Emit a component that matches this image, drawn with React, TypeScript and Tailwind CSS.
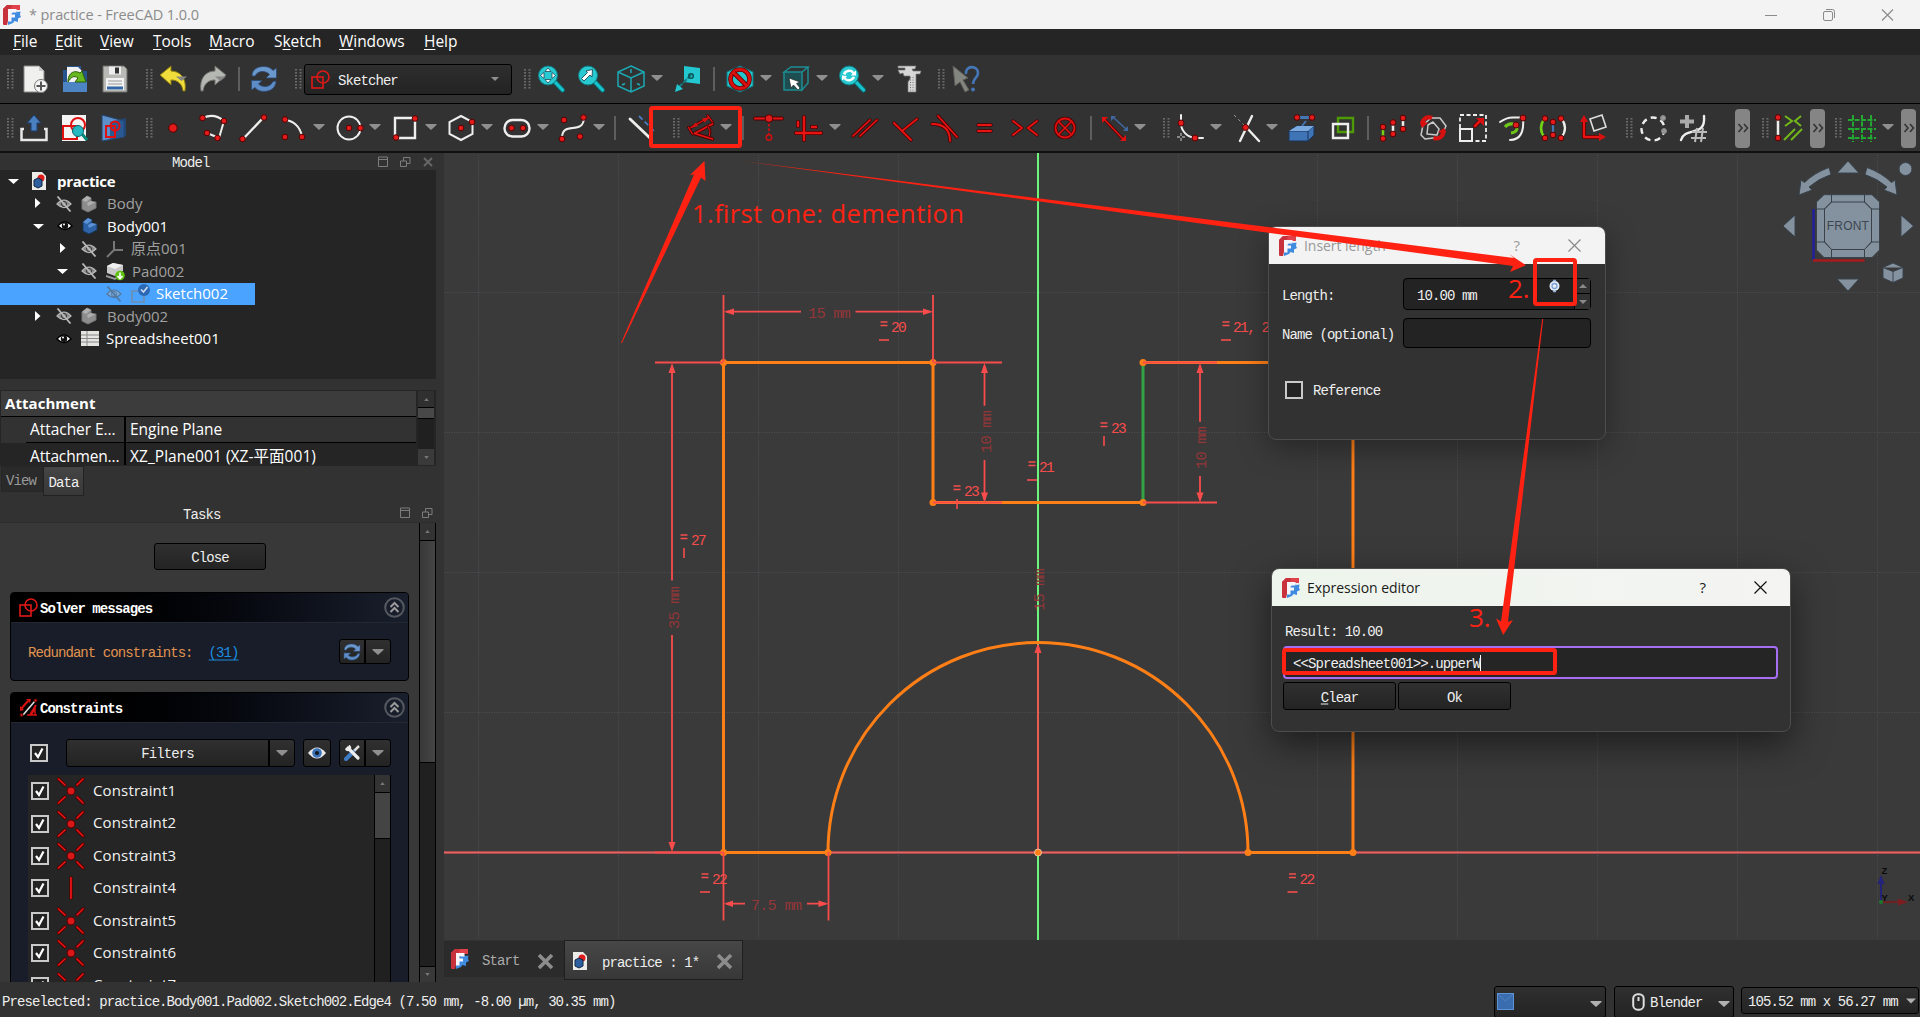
import React from "react";

type Kids = { children?: React.ReactNode };

const MONO = "font-['Liberation_Mono',monospace] text-[14px] tracking-[-0.92px] whitespace-pre";
const SANS = "font-['Open_Sans','Noto_Sans_CJK_SC',sans-serif] whitespace-pre";

/* Monospace label, nudged down to sit on the optical centre of its row. */
const M = ({ children, className = "" }: Kids & { className?: string }) => (
  <span className={`${MONO} translate-y-[1.500px] ${className}`}>{children}</span>
);

/* ---------- drawing helpers ---------- */

const R = ({ d, w = 2.2 }: { d: string; w?: number }) => (
  <g fill="none" strokeLinecap="round" strokeLinejoin="round">
    <path d={d} stroke="#4d0000" strokeWidth={w + 1.6} />
    <path d={d} stroke="#e81414" strokeWidth={w} />
  </g>
);
const W = ({ d, c = "#eeeeec", w = 2 }: { d: string; c?: string; w?: number }) => (
  <path d={d} fill="none" stroke={c} strokeWidth={w} strokeLinecap="round" strokeLinejoin="round" />
);
const D = ({ x, y, r = 2.8, c = "#e31b1b", s = "#5a0000" }: { x: number; y: number; r?: number; c?: string; s?: string }) => (
  <circle cx={x} cy={y} r={r} fill={c} stroke={s} strokeWidth="1" />
);

const Ico = ({ children }: Kids) => (
  <div className="flex w-10 shrink-0 justify-center">
    <svg width="28" height="28" viewBox="0 0 28 28" className="overflow-visible">{children}</svg>
  </div>
);
const Caret = ({ c = "#8f8f8f" }: { c?: string }) => (
  <svg width="12" height="6" viewBox="0 0 12 6"><path d="M0.5 0H11.5V1L6 6L0.5 1Z" fill={c} /></svg>
);
const Arr = () => <div className="flex w-4 shrink-0 -translate-y-px justify-center pr-1"><Caret /></div>;
const Sep = () => <div className="flex w-[11px] shrink-0 justify-center"><div className="h-6 w-0.5 bg-[#5e5e5e]" /></div>;
const Grip = () => (
  <svg width="7" height="20" viewBox="0 0 7 20" className="shrink-0">
    {[0, 3, 6, 9, 12, 15, 18].map((y) => (
      <g key={y} fill="#6a6a6a"><rect x="0" y={y} width="2" height="1.6" /><rect x="4.5" y={y} width="2" height="1.6" /></g>
    ))}
  </svg>
);
const Handle = () => <div className="flex w-[19px] shrink-0 justify-end"><Grip /></div>;
const Handle0 = () => <div className="flex w-[14px] shrink-0 justify-end"><Grip /></div>;
const More = () => (
  <div className="flex h-[39px] w-[15px] shrink-0 items-center justify-center rounded bg-[#858585]">
    <svg width="12" height="10" viewBox="0 0 12 10"><path d="M1.5 1L5 5L1.5 9M7 1L10.5 5L7 9" fill="none" stroke="#333" strokeWidth="1.6" /></svg>
  </div>
);

const Logo = () => (
  <svg width="18" height="20" viewBox="0 0 18 20">
    <path d="M4 0H17V5H6V14L1 20L0 19V4Z" fill="#e0414b" />
    <path d="M4 0H9L4 20H1L0 19V4Z" fill="#c8323c" />
    <path d="M12 5L14.5 7L17.5 6.5L17 10L18 12L15 13.5L15 17L11.5 16L10 18L5 20L5 12Z" fill="#3f8be0" />
    <path d="M5 4H13.5V7.5H8.5V9.5H12V12.5H8.5V16.5H5Z" fill="#f6f6fa" />
  </svg>
);

const Refresh = ({ s = 28 }: { s?: number }) => (
  <svg width={s} height={s} viewBox="0 0 28 28">
    <path d="M2 11C2 4 8 1.5 14 1.5C18 1.5 21 3 23 5.5L26.5 3V13H16L19.5 9.5C16 5.5 8 5 5 11Z" fill="#6a97cc" stroke="#2c4a75" strokeWidth=".8" />
    <path d="M26 16C26 23 20 26.5 14 26.5C10 26.5 7 25 5 22.5L1.5 25V15.5H12L8.5 19C12 22.5 20 23 23 16.5Z" fill="#5d8cc6" stroke="#2c4a75" strokeWidth=".8" />
  </svg>
);

const SketchGlyph = () => (
  <svg width="19" height="19" viewBox="0 0 19 19" fill="none" stroke="#e01818" strokeWidth="1.6">
    <rect x="1" y="7" width="11" height="11" /><circle cx="12" cy="7" r="6" />
  </svg>
);

const Lens = () => (
  <>
    <path d="M17 16L25.5 25" stroke="#0b6a70" strokeWidth="5" strokeLinecap="round" />
    <path d="M17 16L25.5 25" stroke="#19c3cc" strokeWidth="3.2" strokeLinecap="round" />
    <circle cx="11" cy="10.500" r="9.500" fill="#28c9d1" stroke="#0d7d84" strokeWidth="1" />
  </>
);

/* ---------- toolbars ---------- */

const FileBar = () => (
  <div className="flex h-[49px] items-center border-b border-black bg-[#323232]">
    <div className="flex w-[134px] items-center">
      <div className="flex w-[15px] shrink-0 justify-end pr-px"><Grip /></div>
      <Ico>
        <path d="M3 1H18L23 6V27H3Z" fill="#f0f0ee" stroke="#8a8a8a" /><path d="M18 1L23 6H18Z" fill="#c9c9c9" />
        <circle cx="20" cy="21" r="6.500" fill="#f5f5f5" stroke="#777" /><path d="M20 16.500V25.500M15.500 21H24.500" stroke="#555" strokeWidth="2" />
      </Ico>
      <Ico>
        <path d="M2 5H6V1H20V6H26V27H2Z" fill="#25548f" /><path d="M6 2H17L21 6V18H6Z" fill="#f1f1f1" />
        <path d="M2 17H26V27H2Z" fill="#4d85c4" /><path d="M7 15C8 7 14 5 19 8L21 6L25 17H14L17 13C13 10 10 12 7 17Z" fill="#66b81e" stroke="#2c5c06" />
      </Ico>
      <div className="flex w-[39px] shrink-0 justify-center">
        <svg width="28" height="28" viewBox="0 0 28 28">
          <path d="M2 1H23L26 4V27H2Z" fill="#b9b9b5" stroke="#6b6b68" /><rect x="8" y="1.500" width="12" height="8" fill="#eee" /><rect x="14" y="2.500" width="4" height="6" fill="#333" />
          <rect x="5" y="13" width="18" height="12" fill="#f2f2f2" /><path d="M7 16H21M7 19H21" stroke="#999" /><path d="M6 23H22" stroke="#3465a4" strokeWidth="3" />
        </svg>
      </div>
    </div>
    <div className="flex w-[150px] items-center">
      <Handle />
      <Ico>
        <path d="M1 10L12 1V6C21 6 28 13 26 26H24C23 19 19 15 12 15V20Z" fill="#f0dc3a" stroke="#8a7a10" />
        <path d="M17 11.500H28L22.500 16Z" fill="#858585" />
      </Ico>
      <Ico>
        <path d="M27 10L16 1V6C7 6 0 13 2 26H4C5 19 9 15 16 15V20Z" fill="#b5b7b3" stroke="#6f716d" />
        <path d="M16 11.500H27L21.500 16Z" fill="#858585" />
      </Ico>
      <Sep />
      <div className="flex w-10 justify-center"><Refresh /></div>
    </div>
    <div className="flex w-[228px] items-center">
      <div className="flex w-5 justify-end pr-0.5"><Grip /></div>
      <div className="flex h-[31px] w-[208px] items-center rounded-[3px] border border-black bg-gradient-to-b from-[#2e2e2e] to-[#232323] pl-1.5">
        <SketchGlyph />
        <M className="ml-2 flex-1 text-[#eee]">Sketcher</M>
        <span className="mr-3"><svg width="8" height="4" viewBox="0 0 8 4"><path d="M0 0H8L4 4Z" fill="#8f8f8f" /></svg></span>
      </div>
    </div>
    <div className="flex items-center">
      <Handle />
      <Ico><Lens /><path d="M11 3L14 6.500H8ZM11 18L8 14.500H14ZM3.500 10.500L7 7.500V13.500ZM18.500 10.500L15 7.500V13.500Z" fill="#fff" stroke="#134" strokeWidth=".7" /></Ico>
      <Ico><Lens /><path d="M15.500 4.500L9 6L10.500 7.500L4.500 13.500L7 16L13 10L15 12Z" fill="#fff" stroke="#134" strokeWidth=".8" /></Ico>
      <Ico><path d="M14 1L27 7V21L14 27L1 21V7ZM1 7L14 13L27 7M14 13V27M14 4V8M5 20L8 18.500M20 18.500L23 20" fill="none" stroke="#1ba9b3" strokeWidth="1.500" /></Ico>
      <Arr />
      <Ico><path d="M11 1L27 3V19L11 17Z" fill="#22c7d0" /><path d="M18 10L4 24" stroke="#167880" strokeWidth="2" strokeDasharray="5 1" fill="none" /><path d="M2 27L4 19L10 24Z" fill="#22c7d0" /><circle cx="18" cy="11" r="2.300" fill="none" stroke="#0b5055" strokeWidth="1.500" /></Ico>
      <div className="flex w-[13px] justify-center"><Sep /></div>
      <Ico><path d="M14 1L27 7V21L14 27L1 21V7Z" fill="#24c4cc" stroke="#0b7d85" /><circle cx="14" cy="14" r="9.500" fill="none" stroke="#600" strokeWidth="4.600" /><circle cx="14" cy="14" r="9.500" fill="none" stroke="#d81010" strokeWidth="3" /><path d="M8 8L20 20" stroke="#600" strokeWidth="4.600" /><path d="M7.500 7.500L20.500 20.500" stroke="#d81010" strokeWidth="3" /></Ico>
      <Arr />
      <Ico><path d="M2 7H20V25H2Z" fill="#1d4f52" /><path d="M2 7L9 2H26L20 7ZM20 7V25L26 18V2M2 7V25H20" fill="none" stroke="#1c8d94" strokeWidth="1.500" /><path d="M7 13L18 17L14.500 18.500L18 23L16 25L11.500 20L9 23Z" fill="#fff" stroke="#222" strokeWidth=".7" /></Ico>
      <Arr />
      <Ico><Lens /><path d="M5 9C6 4 14 3 16 7L18 5.500V10.500H13L14.500 8.500C12 6 8 7 7.500 10ZM17 12C16 17 8 18 6 14L4 15.500V10.500L9 11L7.500 13C10 15 14 14 14.500 11.500Z" fill="#fff" /></Ico>
      <Arr />
      <Ico><path d="M4 1H22L21 4H18L19 6H27L26 9H22V27H14V17L16 14V11H10L9 8L6 9L4 5H11V3H4Z" fill="#d7d7d7" stroke="#777" strokeWidth=".7" /><path d="M16.500 12V26M19 12V26" stroke="#777" strokeDasharray="1 1.500" /></Ico>
      <div className="flex w-[17px] justify-end"><Grip /></div>
      <Ico><path d="M2 1L17 13L12 15L18 25L14 27L9 17L4 21Z" fill="#83857f" stroke="#5b5c58" /><path d="M15 9C14 0 27 0 27 8C27 13 22 13 22 19" fill="none" stroke="#4577b8" strokeWidth="2.600" /><circle cx="22" cy="24.500" r="1.900" fill="#4577b8" /></Ico>
    </div>
  </div>
);

const SketchBar = () => (
  <div className="flex h-[49px] items-center border-b-2 border-[#111] bg-[#323232] pt-px">
    <div className="flex w-[134px] shrink-0 items-center">
      <Handle0 />
      <Ico><path d="M4 15H1.500V26H26.500V15H24" fill="none" stroke="#e8e8e8" strokeWidth="2.500" /><path d="M14 1L21 9H17V17H11V9H7Z" fill="#4a7fc0" stroke="#1c3e6e" /></Ico>
      <Ico><rect x="2" y="1" width="24" height="26" fill="#f4f4f4" /><path d="M3 12H17V25H3Z" fill="none" stroke="#e01010" strokeWidth="2" /><circle cx="18" cy="11" r="7" fill="none" stroke="#e01010" strokeWidth="2" /><path d="M22 20L27 26" stroke="#087" strokeWidth="3" /><circle cx="18" cy="17" r="5.500" fill="#25b8c0" stroke="#0b6a70" /></Ico>
      <Ico><path d="M2 1L24 7V23L2 27Z" fill="#5d8fcb" stroke="#24466f" /><path d="M10 8L26 4V22L10 26Z" fill="#1f4b83" opacity=".8" /><path d="M6 12H15V23H6Z" fill="none" stroke="#e01010" strokeWidth="2" /><circle cx="15" cy="12" r="4.500" fill="none" stroke="#e01010" strokeWidth="2" /></Ico>
    </div>
    <div className="flex w-[527px] shrink-0 items-center">
      <Handle />
      <Ico><D x={14} y={14} r={4.2} /></Ico>
      <Ico><W d="M4 4C12 0 19 2 25 7L20 24L8 19" /><D x={3.500} y={4} /><D x={25} y={7} /><D x={8} y={19} /><D x={18.500} y={24} /></Ico>
      <Ico><W d="M4 25L25 3" w={2.400} /><D x={3.500} y={25} /><D x={25} y={3.500} /></Ico>
      <Ico><W d="M6 6C16 7 21 14 23 22" /><D x={6} y={5.500} /><D x={6} y={23} /><D x={23} y={23} /></Ico>
      <Arr />
      <Ico><circle cx="14" cy="14" r="11.500" fill="none" stroke="#eee" strokeWidth="2" /><D x={14} y={14} /><D x={25.500} y={14} /></Ico>
      <Arr />
      <Ico><path d="M4 4H24V24H4Z" fill="none" stroke="#eee" strokeWidth="2.400" /><D x={24} y={4.500} /><D x={5} y={23.500} /></Ico>
      <Arr />
      <Ico><path d="M14 2L25.500 8V20L14 26L2.500 20V8Z" fill="none" stroke="#eee" strokeWidth="2" /><D x={14} y={14} /><D x={25} y={8} /></Ico>
      <Arr />
      <Ico><rect x="1.500" y="6" width="25" height="16.500" rx="8" fill="none" stroke="#eee" strokeWidth="2.400" /><D x={8.500} y={14} /><D x={20} y={14} /></Ico>
      <Arr />
      <Ico><W d="M3 24C3 6 24 22 25 4" /><D x={5} y={6} /><D x={24.500} y={3.500} /><D x={3} y={25} /><D x={21} y={22.500} /></Ico>
      <Arr />
      <div className="flex w-3 justify-center"><Sep /></div>
      <Ico><W d="M3 5L23 24" w={2.800} /><path d="M12 2L27 17" stroke="#4a7cc0" strokeWidth="1.800" strokeDasharray="5 3" /></Ico>
    </div>
    <div className="flex w-[490px] shrink-0 items-center">
      <Handle />
      <Ico>
        <R d="M5 13.500L22.500 3.500M2.500 13.500L6.500 20M21.500 1.500L26.500 8" w={1.200} />
        <path d="M3.500 14.500L10 8.500L12 12ZM24 3L16 4.500L18.500 8.500Z" fill="#d81010" />
        <R d="M26.500 10L8.500 19.500L26.500 25" w={1.800} /><R d="M22.500 13Q25 17 23.500 22" w={1} />
      </Ico>
      <Arr />
      <div className="flex w-[13px] justify-center"><Sep /></div>
      <Ico><R d="M0 4.500H27" /><circle cx="14" cy="4.500" r="3.800" fill="#e31b1b" stroke="#500" /><path d="M14 10V20" stroke="#d01010" strokeWidth="1.800" strokeDasharray="2.500 2" /><circle cx="14" cy="23.500" r="2.700" fill="none" stroke="#d01010" strokeWidth="1.500" /></Ico>
      <Ico><R d="M9 3V26M1 19H26M17 13H21M3 8V12" w={2.400} /></Ico>
      <Arr />
      <Ico><R d="M2 22L19 6M9 22L26 6" w={1.700} /></Ico>
      <Ico><R d="M3 9L20 26M11 17L26 5" w={1.800} /></Ico>
      <Ico><R d="M7 2L26 23M1 10Q19 10 19 27" w={1.800} /></Ico>
      <Ico><R d="M7 11H20M7 17H20" w={1.800} /></Ico>
      <Ico><R d="M2 7L11 14L2 21M26 7L17 14L26 21" w={1.700} /></Ico>
      <Ico><circle cx="14" cy="14" r="9.500" fill="none" stroke="#500" strokeWidth="3.600" /><R d="M8 8L20 20M20 8L8 20" w={1.500} /><circle cx="14" cy="14" r="9.500" fill="none" stroke="#e01010" strokeWidth="1.800" /></Ico>
      <Sep />
      <div className="-ml-0.5"><Ico><R d="M4 5L23 25" w={1.500} /><path d="M2 3H8L2 9ZM26 27H20L26 21Z" fill="#e01010" /><W d="M14 4L26 15" c="#4167a0" w={1.500} /><path d="M11 2H16L11 7ZM28 17H23L28 12Z" fill="#4167a0" /></Ico></div>
      <Arr />
    </div>
    <div className="flex w-[463px] shrink-0 items-center">
      <Handle />
      <Ico><W d="M5 1V9C5 17 11 23 19 24H27" /><path d="M5 19V27M1 23H9" stroke="#888" strokeWidth="1.800" strokeDasharray="3 2" /><D x={5} y={9} r={3} /><D x={19} y={24} r={3} /></Ico>
      <Arr />
      <Ico><W d="M20 2L8 27M14 13L27 27" w={2.400} /><path d="M2 1L14 13" stroke="#999" strokeDasharray="3 3" /><D x={13.500} y={13.500} r={3} /></Ico>
      <Arr />
      <Ico><path d="M1 17L9 12H26V21L20 27H1Z" fill="#3f74b7" stroke="#1a3459" /><path d="M1 17H20L26 12M20 17V27" stroke="#1a3459" fill="none" /><path d="M1 17L9 12H26L20 17Z" fill="#7aaae0" /><path d="M9 3.500H23" stroke="#4477b5" strokeWidth="3" /><path d="M14 12L18 7" stroke="#4477b5" strokeWidth="1.800" /><D x={9} y={3.500} /><D x={24} y={3.500} /></Ico>
      <Ico><path d="M10 4H25V18H10Z" fill="none" stroke="#4e9a06" strokeWidth="2.400" /><path d="M5 10H20V24H5Z" fill="none" stroke="#eee" strokeWidth="2.400" /></Ico>
      <Sep />
      <Ico><W d="M4 14V25" c="#73d216" w={2.500} /><W d="M14 9V20M24 4V15" w={2.500} /><D x={4} y={13} /><D x={4} y={24.500} /><D x={14} y={8.500} /><D x={14} y={20} /><D x={24} y={4} /><D x={24} y={15} /></Ico>
      <Ico><W d="M4 11L12 4L21 4L27 12L22 23L6 25L2 21ZM9 11L14 8L20 15L18 21L8 20Z" c="#c9c9c9" w={1.500} /><path d="M1 9C3 2 8 0 14 2L12 6C8 5 7 6 6 8L9 9L3 14ZM27 17C26 24 21 28 14 26L15 22C19 23 21 22 22 19L19 18L25 14Z" fill="#d81010" /></Ico>
      <Ico><rect x="1" y="1" width="26" height="26" fill="none" stroke="#eee" strokeWidth="1.800" strokeDasharray="4 2.500" /><rect x="1" y="15" width="12" height="12" fill="#323232" stroke="#eee" strokeWidth="2" /><R d="M16 12L22 6" w={2.600} /><path d="M17 4H25V12Z" fill="#d81010" /></Ico>
      <Ico><W d="M1 8Q8 3 15 3.500H24Q26 26 11 26" /><path d="M6 13Q10 8 17 11Q20 18 12 19" fill="none" stroke="#6fc61a" strokeWidth="3" /><D x={24} y={4} r={3} /><D x={17} y={11} r={3} /></Ico>
      <Ico><W d="M6 4Q-2 14 6 24" c="#73d216" w={2.500} /><W d="M22 4Q30 14 22 24" w={2.200} /><W d="M14 8V20" c="#4477b5" w={2.200} /><D x={6} y={4.500} /><D x={6} y={24} /><D x={14} y={8} /><D x={14} y={21} /><D x={22} y={4.500} /><D x={22} y={24} /></Ico>
      <Ico><R d="M5 23V6M5 23H22" w={2.400} /><path d="M1 8L5 1L9 8ZM20 19L27 23L20 27Z" fill="#d81010" /><path d="M11 5L23 1L27 13L15 17Z" fill="none" stroke="#ddd" strokeWidth="1.600" /></Ico>
    </div>
    <div className="flex w-[121px] shrink-0 items-center">
      <Handle />
      <Ico><circle cx="14" cy="15" r="11.500" fill="none" stroke="#eee" strokeWidth="2.400" strokeDasharray="6 4.300" /><D x={24} y={4} r={2.500} c="#999" s="#888" /><D x={25} y={17} r={2.500} c="#999" s="#888" /></Ico>
      <Ico><W d="M2 26C6 12 27 24 25 2" w={2.400} /><path d="M8 1V14M1 7.500H15" stroke="#aaa" strokeWidth="4" /><path d="M18 14L16 28M24 14L22 28M13 18H28M12 24H27" stroke="#bbb" strokeWidth="2" /></Ico>
    </div>
    <div className="flex w-[75px] shrink-0 items-center">
      <More /><Handle />
      <Ico><W d="M3 4V24" w={2.500} /><D x={3} y={3.500} /><D x={3} y={24} /><path d="M10 2L17 7L10 12M26 2L20 7L26 12M9 26L20 15M16 26L27 15" fill="none" stroke="#73b81a" strokeWidth="2" /></Ico>
    </div>
    <div className="flex w-[91px] shrink-0 items-center">
      <More /><div className="flex w-[17px] justify-end"><Grip /></div>
      <Ico><path d="M5 1V28M14 1V28M23 1V28M0 6H28M0 15H28M0 24H28" stroke="#22a833" strokeWidth="2" strokeDasharray="5 1.500" /></Ico>
      <Arr />
    </div>
    <More />
  </div>
);

/* ---------- title and menu ---------- */

const menus: [string, string, string, string][] = [
  ["", "F", "ile", "w-[42px]"],
  ["", "E", "dit", "w-[45px]"],
  ["", "V", "iew", "w-[53px]"],
  ["", "T", "ools", "w-[56px]"],
  ["", "M", "acro", "w-[65px]"],
  ["S", "k", "etch", "w-[65px]"],
  ["", "W", "indows", "w-[85px]"],
  ["", "H", "elp", "w-[50px]"],
];

const TitleBar = () => (
  <div className="flex h-[29px] items-center bg-[#f3f3f3] pl-[3px]">
    <Logo />
    <span className={`${SANS} ml-2 flex-1 text-[14.500px] tracking-[-0.1px] text-[#8b8b8b]`}>* practice - FreeCAD 1.0.0</span>
    <div className="flex items-center gap-[46px] pr-[26px]">
      <svg width="12" height="12" viewBox="0 0 12 12"><path d="M0 6.500H12" stroke="#8a8a8a" /></svg>
      <svg width="12" height="12" viewBox="0 0 12 12" fill="none" stroke="#8a8a8a"><rect x=".5" y="2.500" width="9" height="9" rx="1.500" /><path d="M3 .5H9.500Q11.500 .5 11.500 2.500V9" /></svg>
      <svg width="13" height="12" viewBox="0 0 13 12"><path d="M1 .5L12 11.500M12 .5L1 11.500" stroke="#8a8a8a" strokeWidth="1.100" /></svg>
    </div>
  </div>
);

const MenuBar = () => (
  <div className={`${SANS} flex h-[26px] items-center bg-[#252525] pl-[13px] text-[15.500px] tracking-[-0.05px] text-white`}>
    {menus.map(([a, u, b, w]) => (
      <span key={u} className={w}>{a}<span className="underline underline-offset-2">{u}</span>{b}</span>
    ))}
  </div>
);

/* ---------- left dock ---------- */

const DockButtons = ({ close }: { close?: boolean }) => (
  <svg width={close ? 56 : 34} height="12" viewBox={close ? "0 0 56 12" : "0 0 34 12"} fill="none" stroke="#7c7c7c">
    <path d="M.5 1H9.500V10.500H.5ZM.5 3.500H9.500" />
    <path d="M22.500 5H28.500V10.500H22.500ZM25.500 5V1.500H32V7.500H28.500" />
    {close && <path d="M46 2L54 10M54 2L46 10" strokeWidth="2" stroke="#666" />}
  </svg>
);

const Eye = ({ off, sel }: { off?: boolean; sel?: boolean }) => (
  <svg width="16" height="16" viewBox="0 0 16 16">
    {off ? (
      <g stroke={sel ? "#54789e" : "#b8b8b8"} fill="none">
        <path d="M1 8Q8 0 15 8Q8 15 1 8Z" fill={sel ? "#79acdf" : "#8c8c8c"} strokeWidth="1.200" /><circle cx="8" cy="8" r="2.500" stroke={sel ? "#54789e" : "#333"} /><path d="M1.500 0.500L14.500 15.500" strokeWidth="1.800" />
      </g>
    ) : (
      <g><path d="M1 8Q8 0 15 8Q8 15 1 8Z" fill="#fff" stroke="#000" strokeWidth="1.400" /><circle cx="8" cy="7.800" r="3.200" fill="#111" /><circle cx="7" cy="6.500" r="1" fill="#fff" /></g>
    )}
  </svg>
);

const BodyIcon = ({ c, l, d }: { c: string; l: string; d: string }) => (
  <svg width="16" height="18" viewBox="0 0 16 18" strokeLinejoin="round">
    <path d="M1 5L6 1L10 3V8L15 7V13L7 17L1 14Z" fill={c} stroke={d} /><path d="M1 5L6 1L10 3L5 7ZM7 11L15 7L10 6L6 8Z" fill={l} />
  </svg>
);
const icons = {
  doc: <svg width="14" height="18" viewBox="0 0 14 18"><path d="M0 0H10L14 4V18H0Z" fill="#ecece8" /><circle cx="9" cy="6" r="3.500" fill="#e01b1b" /><path d="M2 8L6 6L10 8V14L6 16L2 14Z" fill="#2d5f9f" stroke="#102542" /></svg>,
  gray: <BodyIcon c="#8d8d8d" l="#b0b0b0" d="#777" />,
  blue: <BodyIcon c="#2f63a8" l="#5c93d6" d="#163660" />,
  origin: <svg width="18" height="18" viewBox="0 0 18 18" fill="none" stroke="#777" strokeWidth="2"><path d="M8 1V10H17M8 10L1 17" /></svg>,
  pad: <svg width="19" height="19" viewBox="0 0 19 19"><path d="M1 4L7 1L17 3V9L9 14L1 11Z" fill="#c9c9c9" /><path d="M1 4L7 1L17 3L9 7Z" fill="#f0f0f0" /><path d="M0 14L9 17L12 15" stroke="#999" strokeWidth="2" fill="none" /><circle cx="14" cy="13.500" r="4.800" fill="#5fc211" /><path d="M14 10.500V16M11.500 14L14 16.500L16.500 14" stroke="#fff" strokeWidth="1.600" fill="none" /></svg>,
  sketch: <svg width="19" height="19" viewBox="0 0 19 19"><path d="M1 7H13V18H1Z" fill="none" stroke="#6e8db0" strokeWidth="1.600" /><circle cx="13" cy="6" r="6" fill="#2c68b3" /><path d="M10 5.500L12.500 8L16.500 3" stroke="#c8daf0" strokeWidth="1.700" fill="none" /></svg>,
  sheet: <svg width="18" height="15" viewBox="0 0 18 15"><rect width="18" height="15" fill="#e4e4e0" /><path d="M0 4H18M0 7.500H18M0 11H18M6 0V15" stroke="#888" /></svg>,
};

const Tri = ({ open }: { open?: boolean }) => (
  <svg width="11" height="11" viewBox="0 0 11 11">{open ? <path d="M0 3H11L5.500 8Z" fill="#fff" /> : <path d="M3 0V10L8.500 5Z" fill="#fff" />}</svg>
);

type Row = { pad: string; tri?: "o" | "c"; eye?: "on" | "off"; icon: React.ReactNode; text: string; cls: string; sel?: boolean };
const rows: Row[] = [
  { pad: "pl-[8px]", tri: "o", icon: icons.doc, text: "practice", cls: "text-white font-bold -ml-px tracking-[-0.3px]" },
  { pad: "pl-[32px]", tri: "c", eye: "off", icon: icons.gray, text: "Body", cls: "text-[#a0a0a0]" },
  { pad: "pl-[33px]", tri: "o", eye: "on", icon: icons.blue, text: "Body001", cls: "text-white -ml-px" },
  { pad: "pl-[57px]", tri: "c", eye: "off", icon: icons.origin, text: "原点001", cls: "text-[#a0a0a0] -ml-px" },
  { pad: "pl-[57px]", tri: "o", eye: "off", icon: icons.pad, text: "Pad002", cls: "text-[#a0a0a0]" },
  { pad: "pl-[82px]", eye: "off", icon: icons.sketch, text: "Sketch002", cls: "text-white -ml-px", sel: true },
  { pad: "pl-[32px]", tri: "c", eye: "off", icon: icons.gray, text: "Body002", cls: "text-[#a0a0a0]" },
  { pad: "pl-[32px]", eye: "on", icon: icons.sheet, text: "Spreadsheet001", cls: "text-white -ml-px" },
];

const Tree = () => (
  <div className="h-[209px] w-[436px] bg-[#252525]">
    {rows.map((r) => (
      <div key={r.text} className={`flex h-[22.500px] items-center ${r.pad} ${r.sel ? "w-[255px] bg-[#4aa3ff]" : "w-full"}`}>
        <div className="flex w-[24px]">{r.tri && <Tri open={r.tri === "o"} />}</div>
        {r.eye && <div className="flex w-[25px]"><Eye off={r.eye === "off"} sel={r.sel} /></div>}
        <div className="flex w-[26px]">{r.icon}</div>
        <span className={`${SANS} text-[15px] leading-none ${r.cls}`}>{r.text}</span>
      </div>
    ))}
  </div>
);

const Tiny = ({ up }: { up?: boolean }) => (
  <svg width="5" height="3" viewBox="0 0 6 4"><path d={up ? "M3 0L6 4H0Z" : "M0 0H6L3 4Z"} fill="#777" /></svg>
);

const PropertyTable = () => (
  <div className="mt-[11px] flex h-[76px] w-[436px] border-y border-[#262626] bg-[#252525] pl-px">
    <div className={`${SANS} flex h-[74px] w-[415px] flex-col overflow-hidden bg-[#323232] text-[15.500px] tracking-[-0.05px] text-white`}>
      <div className="flex h-[26px] shrink-0 items-center border-b border-black bg-[#3c3c3c] pl-1 text-[15px] font-bold tracking-[0.05px]">Attachment</div>
      <div className="flex h-[26px] shrink-0">
        <div className="ml-[25px] flex w-[98px] items-center border-b border-black pl-1">Attacher E...</div>
        <div className="flex flex-1 items-center border-b border-l-2 border-black pl-1">Engine Plane</div>
      </div>
      <div className="flex h-[27px] shrink-0 bg-[#252525]">
        <div className="flex w-[123px] items-center pl-[29px] tracking-[-0.15px]">Attachmen...</div>
        <div className="flex flex-1 items-center border-l-2 border-black pl-1 tracking-[0.05px]">XZ_Plane001 (XZ-平面001)</div>
      </div>
    </div>
    <div className="ml-0.5 flex w-4 flex-col">
      <div className="flex h-4 items-center justify-center bg-[#303030]"><Tiny up /></div>
      <div className="h-3 border-y border-black bg-[#484848]" />
      <div className="flex-1 bg-[#202020]" />
      <div className="flex h-4 items-center justify-center bg-[#3a3a3a]"><Tiny /></div>
    </div>
  </div>
);

const BTN = "rounded-[3px] border border-black bg-gradient-to-b from-[#303030] to-[#232323]";

const Check = ({ on }: { on?: boolean }) => (
  <div className="flex size-[18px] shrink-0 items-center justify-center border-2 border-[#c9c9c9] bg-[#232323]">
    {on && <svg width="12" height="12" viewBox="0 0 12 12"><path d="M2 6L5 10L9.500 1.500" fill="none" stroke="#fff" strokeWidth="2.200" /></svg>}
  </div>
);

const Head = ({ icon, title }: { icon: React.ReactNode; title: string }) => (
  <div className="flex h-[30px] shrink-0 items-center border-b border-[#232732] bg-gradient-to-r from-black to-[#1a1f2d] pl-2 pr-[3px]">
    <div className="flex w-[21px]">{icon}</div>
    <M className="flex-1 font-bold text-white">{title}</M>
    <svg width="21" height="21" viewBox="0 0 21 21" fill="none" stroke="#777a80">
      <circle cx="10.500" cy="10.500" r="9.300" strokeWidth="2" stroke="#55585f" /><path d="M6.500 10L10.500 6L14.500 10M6.500 15L10.500 11L14.500 15" strokeWidth="2" stroke="#9a9a9a" />
    </svg>
  </div>
);

const SplitButton = ({ children, tall }: Kids & { tall?: boolean }) => (
  <div className={`${BTN} flex w-[52px] ${tall ? "h-[28px]" : "h-[25px]"}`}>
    <div className="flex w-[26px] items-center justify-center border-r-2 border-black">{children}</div>
    <div className="flex flex-1 items-center justify-center"><Caret c="#8f8f8f" /></div>
  </div>
);

const CoincidentIcon = () => (
  <svg width="28" height="28" viewBox="0 0 28 28"><R d="M1.500 2L8 8M26 2L20 8M1.500 26L8 20M26 26L20 20" w={1.700} /><D x={14} y={14} r={4} c="#d81818" /></svg>
);
const VerticalIcon = () => <svg width="28" height="28" viewBox="0 0 28 28"><R d="M14 4V24" w={1.800} /></svg>;

const Tasks = () => (
  <div className="flex h-[460px] w-[436px] border-t border-[#2c2c2c] bg-[#383838]">
    <div className="flex w-[419px] flex-col overflow-hidden pl-[10px]">
      <div className={`${BTN} ml-[144px] mt-5 flex h-[27px] w-[112px] shrink-0 items-center justify-center text-[#eee]`}><M>Close</M></div>
      <div className="mt-[22px] flex h-[89px] w-[399px] shrink-0 flex-col overflow-hidden rounded border border-black bg-[#181d29]">
        <Head icon={<SketchGlyph />} title="Solver messages" />
        <div className="flex flex-1 items-center pl-[17px] pr-[17px]">
          <M className="text-[#e2934e]">Redundant constraints:</M>
          <M className="ml-4 flex-1 text-[#1b8ce0] underline underline-offset-3">(31)</M>
          <SplitButton><Refresh s={18} /></SplitButton>
        </div>
      </div>
      <div className="mt-[11px] flex h-[320px] w-[399px] shrink-0 flex-col overflow-hidden rounded border border-black bg-[#181d29]">
        <Head
          icon={<svg width="19" height="19" viewBox="0 0 19 19"><path d="M2 11L9 3M11 17L17 7" stroke="#d81010" strokeWidth="2" /><path d="M4 17L16 3" stroke="#ddd" strokeWidth="1.600" /><path d="M1 13V8L5 12ZM12 1H7L11 5Z" fill="#d81010" /><path d="M8 17H18M12 17L16 11V17" stroke="#d81010" fill="none" strokeWidth="1.400" /><D x={16.500} y={2.500} r={1.500} /><D x={2.500} y={17} r={1.500} /></svg>}
          title="Constraints"
        />
        <div className="flex h-[52px] shrink-0 items-center pl-[19px] pt-[7px]">
          <Check on />
          <div className={`${BTN} ml-[18px] flex h-[28px] w-[229px] text-[#eee]`}>
            <div className="flex flex-1 items-center justify-center border-r-2 border-black"><M>Filters</M></div>
            <div className="flex w-6 items-center justify-center"><Caret /></div>
          </div>
          <div className={`${BTN} ml-2 flex h-[28px] w-[28px] items-center justify-center`}>
            <svg width="18" height="14" viewBox="0 0 18 14"><path d="M0 7Q9 -4 18 7Q9 18 0 7Z" fill="#e8e8e8" /><circle cx="9" cy="7" r="4.800" fill="#3b73b9" /><circle cx="9" cy="7" r="2.100" fill="#101820" /></svg>
          </div>
          <div className="ml-2">
            <SplitButton tall>
              <svg width="17" height="17" viewBox="0 0 17 17"><path d="M15 2L9 8" stroke="#ddd" strokeWidth="2.500" /><path d="M9 8L2 15" stroke="#3f7cc6" strokeWidth="4" strokeLinecap="round" /><path d="M4 4L14 14" stroke="#eee" strokeWidth="3.200" strokeLinecap="round" /><path d="M1 5C2 8 6 8 7 5C8 3 6 1 5 1L4 3.500L2 4Z" fill="#eee" /></svg>
            </SplitButton>
          </div>
        </div>
        <div className="ml-[17px] flex h-[240px] w-[363px] shrink-0">
          <div className="flex w-[346px] flex-col bg-[#252525]">
            {["1", "2", "3", "4", "5", "6", "7"].map((n) => (
              <div key={n} className="flex h-[32.400px] shrink-0 items-center pl-[3px]">
                <Check on />
                <div className="ml-2 flex">{n === "4" ? <VerticalIcon /> : <CoincidentIcon />}</div>
                <span className={`${SANS} ml-2 -translate-y-px text-[15px] tracking-[0.15px] text-[#f2f2f2]`}>{`Constraint${n}`}</span>
              </div>
            ))}
          </div>
          <div className="flex w-[17px] flex-col border-x border-black bg-[#202020]">
            <div className="flex h-[17px] items-center justify-center bg-[#333]"><Tiny up /></div>
            <div className="h-[47px] border-y border-black bg-[#444]" />
          </div>
        </div>
      </div>
    </div>
    <div className="flex w-[17px] flex-col border-x border-black bg-[#202020]">
      <div className="flex h-[17px] items-center justify-center bg-[#333]"><Tiny up /></div>
      <div className="h-[223px] border-y border-black bg-gradient-to-r from-[#383838] to-[#454545]" />
      <div className="flex-1" />
      <div className="flex h-[16px] items-center justify-center border-t border-black bg-[#383838]"><Tiny /></div>
    </div>
  </div>
);

const LeftDock = () => (
  <div className="flex w-[444px] shrink-0 flex-col bg-[#323232]">
    <div className="flex h-[17px] items-center">
      <M className="ml-[172px] w-[206px] text-[#eee]">Model</M>
      <DockButtons close />
    </div>
    <Tree />
    <PropertyTable />
    <div className="flex h-[31px] items-start pl-px">
      <div className="flex h-[26px] w-[42px] items-center justify-center border border-[#272727] bg-[#2a2a2a] text-[#999]"><M className="-ml-0.5">View</M></div>
      <div className="flex h-[30px] w-[41px] items-center justify-center border border-[#222] bg-gradient-to-b from-[#454545] to-[#383838] text-[#f0f0f0]"><M>Data</M></div>
    </div>
    <div className="flex h-[25px] items-center pt-[7px]">
      <M className="ml-[183px] w-[217px] text-[#eee]">Tasks</M>
      <DockButtons />
    </div>
    <Tasks />
  </div>
);

/* ---------- 3D view (origin of the drawing at page position 444,153) ---------- */

const OR = "#ff7f17";
const RD = "#f84c4c";
const CONS: [number, number, string, "h" | "v"][] = [
  [884, 324, "20", "h"], [1032, 464, "21", "h"], [957, 488, "23", "v"], [1104, 425, "23", "v"],
  [684, 537, "27", "v"], [1226, 324, "21, 22", "h"], [705, 876, "22", "h"], [1292.5, 876, "22", "h"],
];

const DimText = ({ x, y, v, t = "15 mm" }: { x: number; y: number; v?: boolean; t?: string }) => (
  <text x={x} y={y} transform={v ? `rotate(-90 ${x} ${y})` : undefined} dy="5" textAnchor="middle" fontFamily="Liberation Mono" fontSize="15.500" letterSpacing="-0.9" fill="#943638">{t}</text>
);

const View3D = () => (
  <svg width="1476" height="787" viewBox="444 153 1476 787" className="block bg-[#3a3a3a]">
    <g stroke="#4a4f54" strokeDasharray="1 1.500" fill="none">
      <path d="M478.500 155V940M618.500 155V940M758.500 155V940M898.500 155V940M1178.500 155V940M1317.500 155V940M1457.500 155V940M1597.500 155V940M1737.500 155V940M1877.500 155V940" />
      <path d="M444 292.500H1920M444 432.500H1920M444 572.500H1920M444 712.500H1920" />
    </g>
    <path d="M1038 152V940" stroke="#6ef57c" strokeWidth="2" />
    <path d="M444 852.500H1920" stroke="#a84c4e" strokeWidth="2.800" />
    <path d="M444 852.500H1920" stroke="#e06666" strokeWidth="1" />
    <g fill="none" stroke={OR} strokeWidth="3">
      <path d="M828 852.500H723.500V362.500H933V502.500H1143M1143 362.500H1353V852.500H1248M828 852.500A210 210 0 0 1 1248 852.500" />
      <path d="M1143 362.500V502.500" stroke="#35a343" />
    </g>
    {[[723.5, 362.5], [933, 362.5], [933, 502.5], [1143, 502.5], [1143, 362.5], [723.5, 852.5], [828, 852.5], [1038, 852.5], [1248, 852.5], [1353, 852.5]].map(([x, y]) => (
      <circle key={`${x}-${y}`} cx={x} cy={y} r="3.500" fill={OR} />
    ))}
    <g stroke={RD} strokeWidth="1.800" fill="none">
      <path d="M723.500 295V362M933 295V362M726 311.700H801M855.500 311.700H930" />
      <path d="M933 362.500H1002M933 502.500H1002M984.500 366V405.700M984.500 460V500" />
      <path d="M1143 362.500H1217M1143 502.500H1217M1200 366V421.700M1200 476V500" />
      <path d="M655 362.500H723M655 852.500H723M672 366V580.500M672 635V849" />
      <path d="M1038 645V850" />
      <path d="M723.500 852V920.500M828.500 852V920.500M726 903.700H745M807 903.700H826" />
    </g>
    <g fill={RD}>
      <path d="M724 311.700L734 308.500V315ZM933 311.700L923 308.500V315ZM984.500 363L981 373H988ZM984.500 502.500L981 492.500H988ZM1200 363L1196.500 373H1203.500ZM1200 502.500L1196.500 492.500H1203.500ZM672 363L668.500 373H675.500ZM672 852L668.500 842H675.500ZM1038 643L1034.500 653H1041.500ZM724 903.700L733 900.500V907ZM828.500 903.700L818.500 900.500V907Z" />
    </g>
    <circle cx="1038" cy="852.500" r="3.500" fill={OR} stroke="#eee" strokeWidth=".6" />
    <DimText x={829} y={313} />
    <DimText x={985.5} y={432} v t="10 mm" />
    <DimText x={1200.5} y={448} v t="10 mm" />
    <DimText x={673.5} y={608} v t="35 mm" />
    <DimText x={1039} y={590} v />
    <DimText x={776} y={905} t="7.5 mm" />
    {CONS.map(([x, y, t, k]) => (
      <g key={`${x}-${y}`} stroke={RD} fill="none" strokeWidth="1.600">
        <path d={`M${x - 3.5} ${y - 2}h7M${x - 3.5} ${y + 1.5}h7`} strokeWidth="1.400" />
        <path d={k === "h" ? `M${x - 5} ${y + 16}h10` : `M${x} ${y + 11}v10`} />
        <text x={x + 7} y={y + 7.5} fontFamily="Liberation Mono" fontSize="14.500" letterSpacing="-1.600" fill={RD} stroke="none">{t}</text>
      </g>
    ))}
    <g fill="#84929f" stroke="#39424b" strokeWidth="1" strokeLinejoin="round">
      <path d="M1848 161L1859 173H1837ZM1848 291L1859 279H1837ZM1783 226L1795 215V237ZM1913.500 226L1901 215V237Z" />
      <circle cx="1905.500" cy="169" r="6.500" />
      <path d="M1829 167.500L1831 174.500Q1818 179 1809 187L1812 190L1799 195L1801 180L1804.500 182.500Q1814 173 1829 167.500Z" />
      <path d="M1867 167.500L1865 174.500Q1878 179 1887 187L1884 190L1897 195L1895 180L1891.500 182.500Q1882 173 1867 167.500Z" />
      <path d="M1824 194.700H1872L1879.500 202V250L1872 257.500H1824L1816.500 250V202Z" />
      <path d="M1831.500 202H1864.500L1871.500 209V242L1864.500 249.500H1831.500L1824.500 242V209ZM1831.500 194.700V202L1824.500 209H1816.500M1864.500 194.700V202L1871.500 209H1879.500M1831.500 257.500V249.500L1824.500 242H1816.500M1864.500 257.500V249.500L1871.500 242H1879.500" fill="none" />
      <path d="M1893 263L1903 267.500V278L1893 282.500L1883 278V267.500ZM1883 267.500L1893 271.500L1903 267.500M1893 271.500V282.500" />
    </g>
    <text x="1848" y="230" textAnchor="middle" fontFamily="Liberation Sans" fontSize="12" letterSpacing=".2" fill="#3c4752">FRONT</text>
    <path d="M1813.500 209V260" stroke="#20209c" strokeWidth="2.500" />
    <path d="M1813 260.500H1864.500" stroke="#a81a1e" strokeWidth="2.500" />
    <path d="M1881 902V880" stroke="#23237c" strokeWidth="2" /><path d="M1881 875L1884.500 884H1877.500Z" fill="#23237c" />
    <path d="M1881 902H1900" stroke="#6e2022" strokeWidth="2" /><path d="M1908 902L1898 898.500V905.500Z" fill="#7e1d1f" />
    <circle cx="1881" cy="902" r="2" fill="#1c7a2c" />
    <g fontFamily="Liberation Sans" fontSize="9.500" fontWeight="bold" fill="#0a0a0a"><text x="1881.500" y="874">Z</text><text x="1881.500" y="901">Y</text><text x="1908" y="901">X</text></g>
  </svg>
);

const TabClose = () => <svg width="17" height="17" viewBox="0 0 17 17"><path d="M2 2L15 15M15 2L2 15" stroke="#8c8c8c" strokeWidth="3.600" /></svg>;

const DocTabs = () => (
  <div className="flex h-[42px] items-start bg-[#323232]">
    <div className="mt-px flex h-[36px] w-[120px] items-center border border-[#2a2a2a] bg-[#2b2b2b] pl-1.5 pr-[9px] text-[#aaa]">
      <Logo /><M className="ml-[13px] flex-1">Start</M><div className="pt-1"><TabClose /></div>
    </div>
    <div className="flex h-[40px] w-[179px] items-center border border-[#1f1f1f] bg-gradient-to-b from-[#474747] to-[#383838] pl-[8px] pr-[9px] pt-0.5 text-[#eee]">
      {icons.doc}<M className="ml-[15px] flex-1">practice : 1*</M><TabClose />
    </div>
  </div>
);

const StatusBar = () => (
  <div className="flex h-[35px] items-center bg-[#323232] pl-[2px] text-[#eee]">
    <M className="w-[1492px] pt-0.5">Preselected: practice.Body001.Pad002.Sketch002.Edge4 (7.50 mm, -8.00 µm, 30.35 mm)</M>
    <div className={`${BTN} mt-1 flex h-[32px] w-[112px] items-center justify-between pl-0.5 pr-[3px]`}>
      <svg width="17" height="17" viewBox="0 0 17 17"><rect x=".5" y=".5" width="16" height="16" fill="#3a6db0" stroke="#5d93d6" /><path d="M1 1L8.500 8L16 1" fill="none" stroke="#5582b8" /></svg>
      <div className="pt-1"><Caret c="#b0b0b0" /></div>
    </div>
    <div className={`${BTN} ml-2 mt-1 flex h-[32px] w-[120px] items-center pl-[17px] pr-[3px]`}>
      <svg width="13" height="18" viewBox="0 0 13 18"><rect x="1.200" y="1.200" width="10.500" height="15.500" rx="4.500" fill="none" stroke="#ddd" strokeWidth="2" /><path d="M6.500 4V8" stroke="#ddd" strokeWidth="2" /></svg>
      <M className="ml-[5px] flex-1">Blender</M>
      <div className="pt-1"><Caret c="#b0b0b0" /></div>
    </div>
    <div className={`${BTN} ml-[7px] mt-0.5 flex h-[27px] w-[178px] items-center justify-between pl-1.5 pr-0.5`}>
      <M>105.52 mm x 56.27 mm</M><svg width="10" height="6" viewBox="0 0 12 6"><path d="M0 0H12L6 6Z" fill="#b0b0b0" /></svg>
    </div>
  </div>
);

/* ---------- dialogs ---------- */

const DlgTitle = ({ title, dim }: { title: string; dim?: boolean }) => (
  <div className={`flex h-[37px] shrink-0 items-center pl-[10px] ${dim ? "bg-[#f3f3f3] pr-[24px] text-[#999]" : "bg-gradient-to-r from-[#edf5ec] to-[#f4f4f2] pr-[23px] text-[#1a1a1a]"}`}>
    <Logo />
    <span className={`${SANS} ml-[7px] flex-1 text-[14px] tracking-[-0.05px]`}>{title}</span>
    <span className={`${SANS} mr-[48px] text-[15px]`}>?</span>
    <svg width="13" height="13" viewBox="0 0 13 13"><path d="M.5 .5L12.500 12.500M12.500 .5L.5 12.500" stroke={dim ? "#888" : "#111"} strokeWidth="1.200" /></svg>
  </div>
);

const InsertLength = () => (
  <div className="absolute left-[1268px] top-[226px] flex h-[214px] w-[338px] flex-col overflow-hidden rounded-lg border border-[#4d4d4d] bg-[#323232] shadow-[0_8px_30px_rgba(0,0,0,0.35)]">
    <DlgTitle title="Insert length" dim />
    <div className="flex flex-col pl-[13px] text-[#eee]">
      <div className="mt-[14px] flex h-8 items-center">
        <M className="w-[121px]">Length:</M>
        <div className="flex h-8 w-[188px] rounded-sm border border-black bg-[#232323]">
          <div className="flex flex-1 items-center pl-[13px]"><M>10.00 mm</M></div>
          <div className="flex w-4 flex-col border-l border-black bg-[#323232]">
            <div className="flex h-[15px] items-center justify-center border-b border-black"><svg width="8" height="4" viewBox="0 0 8 4"><path d="M0 4H8L4 0Z" fill="#888" /></svg></div>
            <div className="flex flex-1 items-center justify-center"><svg width="8" height="4" viewBox="0 0 8 4"><path d="M0 0H8L4 4Z" fill="#888" /></svg></div>
          </div>
        </div>
      </div>
      <div className="mt-2 flex h-[30px] items-center">
        <M className="w-[121px]">Name (optional)</M>
        <div className="h-[30px] w-[188px] rounded-sm border border-black bg-[#232323]" />
      </div>
      <div className="mt-[31px] flex items-center gap-[10px] pl-[3px]"><Check /><M>Reference</M></div>
    </div>
  </div>
);

const ExpressionEditor = () => (
  <div className="absolute left-[1271px] top-[568px] flex h-[164px] w-[520px] flex-col overflow-hidden rounded-lg border border-[#4d4d4d] bg-[#323232] shadow-[0_12px_36px_rgba(0,0,0,0.5)]">
    <DlgTitle title="Expression editor" />
    <div className="flex flex-col pl-[11px] text-[#eee]">
      <M className="ml-[2px] mt-[14px] h-5 leading-5">Result: 10.00</M>
      <div className="mt-[6px] flex h-[33px] w-[495px] items-center rounded-sm border-2 border-[#a66ef2] bg-[#252525] pl-2">
        <M>{"<<Spreadsheet001>>.upperW"}</M><span className="h-4 w-px bg-white" />
      </div>
      <div className="mt-[3px] flex gap-[2px]">
        <div className={`${BTN} flex h-7 w-[113px] items-center justify-center`}><M><span className="underline underline-offset-2">C</span>lear</M></div>
        <div className={`${BTN} flex h-7 w-[113px] items-center justify-center`}><M>Ok</M></div>
      </div>
    </div>
  </div>
);

const Annotations = () => (
  <svg width="1920" height="1017" viewBox="0 0 1920 1017" className="pointer-events-none absolute left-0 top-0">
    <g fill="none" stroke="#ff2213" strokeWidth="4" strokeLinejoin="round">
      <rect x="651" y="108" width="89" height="38" rx="1.500" />
      <rect x="1535" y="260" width="40" height="44" rx="1.500" />
      <rect x="1284" y="650" width="271" height="23" rx="1.500" />
    </g>
    <g fill="#ff2213">
      <path d="M621 343L694 174.500L690 175L704.500 161L705.500 181L701 177.500L622 343Z" />
      <path d="M742 161L1514 258L1509 254L1526 265.200L1510 272L1513 266Z" />
      <path d="M1542.200 319H1543.200L1508 622L1513 620L1503.200 635L1496 618.500L1501 621.500Z" />
    </g>
    <g fontFamily="Open Sans" fill="#ff2213">
      <text x="692" y="223" fontSize="25.500" textLength="272">1.first one: demention</text>
      <text x="1508" y="298" fontSize="26">2.</text>
      <text x="1469" y="627" fontSize="26">3.</text>
    </g>
    <circle cx="1554.500" cy="286" r="5" fill="#e6eefa" /><circle cx="1554.500" cy="286" r="2.500" fill="none" stroke="#7b9fcf" strokeWidth="1.300" />
    <path d="M1553 280.500H1556M1553 291.500H1556" stroke="#8faed4" strokeWidth="1.500" />
  </svg>
);

export default function App() {
  return (
    <div className="relative flex h-[1017px] w-[1920px] flex-col overflow-hidden bg-[#323232]">
      <TitleBar />
      <MenuBar />
      <FileBar />
      <SketchBar />
      <div className="flex h-[829px]">
        <LeftDock />
        <div className="flex w-[1476px] flex-col">
          <View3D />
          <DocTabs />
        </div>
      </div>
      <StatusBar />
      <InsertLength />
      <ExpressionEditor />
      <Annotations />
    </div>
  );
}
